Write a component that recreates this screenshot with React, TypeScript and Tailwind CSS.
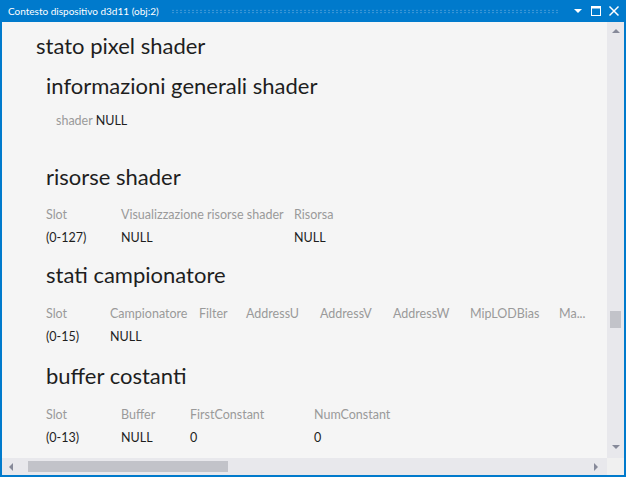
import React from "react";

const FONT = "font-['Lato','Noto_Sans',sans-serif]";

type Col = { label: string; value?: string };

function Heading(props: { children: React.ReactNode; className?: string }) {
  return (
    <h2 className={["text-[22px] leading-none text-[#1e1e1e]", props.className ?? ""].join(" ")}>
      {props.children}
    </h2>
  );
}

// header row + single data row, columns laid out by a fixed grid template
function SlotTable(props: { cols: Col[]; template: string }) {
  return (
    <div className={["grid text-[12.5px] leading-[12px]", props.template].join(" ")}>
      {props.cols.map((c, i) => (
        <div key={`h-${i}`} className="whitespace-nowrap text-[#9a9a9a]">
          {c.label}
        </div>
      ))}
      {props.cols.map((c, i) => (
        <div key={`v-${i}`} className="mt-[11px] whitespace-nowrap text-[#1e1e1e]">
          {c.value ?? ""}
        </div>
      ))}
    </div>
  );
}

function Arrow(props: { dir: "up" | "down" | "left" | "right" }) {
  const pts = {
    up: "0,4 4,0 8,4",
    down: "0,0 8,0 4,4",
    left: "4,0 4,8 0,4",
    right: "0,0 4,4 0,8",
  }[props.dir];
  const vertical = props.dir === "up" || props.dir === "down";
  return (
    <svg width={vertical ? 8 : 4} height={vertical ? 4 : 8} className="fill-[#868999]">
      <polygon points={pts} />
    </svg>
  );
}

export default function App() {
  return (
    <div className={["flex h-[477px] w-[626px] flex-col border-2 border-t-0 border-[#007acc] bg-[#f5f5f5]", FONT].join(" ")}>
      {/* title bar */}
      <div className="flex h-[22px] shrink-0 items-center gap-2 bg-[#007acc] pl-[6px] pr-[4px] text-white">
        <span className="whitespace-nowrap text-[10px] leading-none">Contesto dispositivo d3d11 (obj:2)</span>
        <div className="mx-1 h-[5px] flex-1 bg-[radial-gradient(#4f9fd9_0.8px,transparent_1px)] bg-[length:4px_2.5px]" />
        <div className="flex items-center gap-[6px]">
          <svg width="12" height="12" viewBox="0 0 12 12" className="fill-white">
            <polygon points="2,4 10,4 6,8" />
          </svg>
          <svg width="12" height="12" viewBox="0 0 12 12" fill="none" className="stroke-white">
            <rect x="1.5" y="1.5" width="9" height="9" strokeWidth="1" />
            <line x1="1.5" y1="2.5" x2="10.5" y2="2.5" strokeWidth="2" />
          </svg>
          <svg width="12" height="12" viewBox="0 0 12 12" className="stroke-white" strokeWidth="1.5">
            <line x1="1.5" y1="1.5" x2="10.5" y2="10.5" />
            <line x1="10.5" y1="1.5" x2="1.5" y2="10.5" />
          </svg>
        </div>
      </div>

      <div className="flex min-h-0 flex-1">
        {/* content */}
        <div className="min-w-0 flex-1 overflow-hidden">
          <div className="pl-[34px] pt-[13px]">
            <Heading>stato pixel shader</Heading>
            <div className="pl-[10px]">
              <Heading className="mt-[18px]">informazioni generali shader</Heading>
              <div className="mt-[18px] pl-[10px] text-[12.5px] leading-[12px]">
                <span className="text-[#9a9a9a]">shader</span> <span className="text-[#1e1e1e]">NULL</span>
              </div>

              <Heading className="mt-[39px]">risorse shader</Heading>
              <div className="mt-[21px]">
                <SlotTable
                  template="grid-cols-[75px_173px_80px]"
                  cols={[
                    { label: "Slot", value: "(0-127)" },
                    { label: "Visualizzazione risorse shader", value: "NULL" },
                    { label: "Risorsa", value: "NULL" },
                  ]}
                />
              </div>

              <Heading className="mt-[20px]">stati campionatore</Heading>
              <div className="mt-[22px]">
                <SlotTable
                  template="grid-cols-[64px_89px_47px_74px_73px_77px_89px_60px]"
                  cols={[
                    { label: "Slot", value: "(0-15)" },
                    { label: "Campionatore", value: "NULL" },
                    { label: "Filter" },
                    { label: "AddressU" },
                    { label: "AddressV" },
                    { label: "AddressW" },
                    { label: "MipLODBias" },
                    { label: "Ma..." },
                  ]}
                />
              </div>

              <Heading className="mt-[22px]">buffer costanti</Heading>
              <div className="mt-[22px]">
                <SlotTable
                  template="grid-cols-[75px_69px_124px_100px]"
                  cols={[
                    { label: "Slot", value: "(0-13)" },
                    { label: "Buffer", value: "NULL" },
                    { label: "FirstConstant", value: "0" },
                    { label: "NumConstant", value: "0" },
                  ]}
                />
              </div>
            </div>
          </div>
        </div>

        {/* vertical scrollbar */}
        <div className="flex w-[17px] shrink-0 flex-col items-center bg-[#e8e8ec] pb-[9px] pt-[7px]">
          <Arrow dir="up" />
          <div className="w-full flex-1 px-[3px] pt-[278px]">
            <div className="h-[17px] w-full bg-[#c2c3c9]" />
          </div>
          <Arrow dir="down" />
        </div>
      </div>

      {/* horizontal scrollbar */}
      <div className="flex h-[17px] shrink-0">
        <div className="flex flex-1 items-center bg-[#e8e8ec] pl-[7px] pr-[9px]">
          <Arrow dir="left" />
          <div className="ml-[15px] h-[11px] w-[200px] bg-[#c2c3c9]" />
          <div className="flex-1" />
          <Arrow dir="right" />
        </div>
        <div className="w-[17px] bg-[#f0f0f0]" />
      </div>
    </div>
  );
}
